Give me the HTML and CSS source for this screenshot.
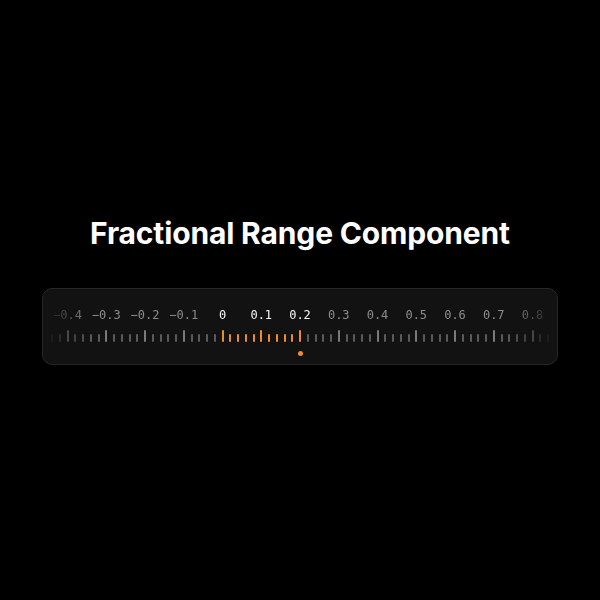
FILE: index.html
```html
<!DOCTYPE html>
<html lang="en">
<head>
    <meta charset="UTF-8">
    <meta name="viewport" content="width=device-width, initial-scale=1.0">
    <title>Fractional Range Component</title>
    <link rel="stylesheet" href="styles.css">
</head>
<body>
    <main class="demo">
        <h1 class="demo-title">Fractional Range Component</h1>
        <div class="range-card">
            <div class="ruler" id="ruler"></div>
        </div>
    </main>

    <script>
        // ruler from -0.44 to 0.84 in steps of 0.02, selection 0 -> 0.2
        const ruler = document.getElementById('ruler');
        const start = -22, end = 42;
        const selFrom = 0, selTo = 10;

        for (let i = start; i <= end; i++) {
            const col = document.createElement('div');
            col.className = 'step';

            const label = document.createElement('span');
            label.className = 'step-label';
            if (i % 5 === 0) {
                const v = i / 50;
                label.textContent = v === 0 ? '0' : (v < 0 ? '\u2212' : '') + Math.abs(v).toFixed(1);
            }
            if (i >= selFrom && i <= selTo) label.classList.add('is-active');

            const tick = document.createElement('span');
            tick.className = 'tick' + (i % 5 === 0 ? ' tick-major' : '');
            if (i >= selFrom && i <= selTo) tick.classList.add('is-active');

            const dot = document.createElement('span');
            dot.className = 'dot' + (i === selTo ? ' is-visible' : '');

            col.append(label, tick, dot);
            ruler.appendChild(col);
        }
    </script>
</body>
</html>
```

FILE: styles.css
```css
body {
    margin: 0;
    height: 100vh;
    background: #000;
    color: #fff;
    font-family: Inter, "Noto Sans", sans-serif;
    display: flex;
    justify-content: center;
    align-items: center;
}
.demo {
    display: flex;
    flex-direction: column;
    align-items: center;
    gap: 37px;
    padding-top: 2px;
    padding-bottom: 22px;
}
.demo-title {
    margin: 0;
    font-size: 30px;
    line-height: 36px;
    font-weight: 700;
    letter-spacing: -0.15px;
}
.range-card {
    width: 498px;
    padding: 19px 8px 8px;
    background-color: #121212;
    border: 1px solid #262626;
    border-radius: 10px;
}
.ruler {
    display: flex;
    justify-content: space-between;
    -webkit-mask-image: linear-gradient(90deg, rgba(0,0,0,0.15), #000 40px, #000 calc(100% - 40px), rgba(0,0,0,0.15));
    mask-image: linear-gradient(90deg, rgba(0,0,0,0.15), #000 40px, #000 calc(100% - 40px), rgba(0,0,0,0.15));
}
.step {
    width: 2px;
    display: flex;
    flex-direction: column;
    align-items: center;
}
.step-label {
    height: 14px;
    font-family: "DejaVu Sans Mono", "Liberation Mono", monospace;
    font-size: 12px;
    line-height: 14px;
    white-space: nowrap;
    color: #8c8c8c;
}
.step-label.is-active {
    color: #f6f6f6;
}
.tick {
    width: 2px;
    height: 8px;
    margin-top: 12px;
    border-radius: 1px;
    background-color: #5a5a5a;
}
.tick-major {
    height: 12px;
    margin-top: 8px;
    background-color: #7a7a7a;
}
.tick.is-active {
    background-color: #f08a2e;
}
.dot {
    width: 5px;
    height: 5px;
    margin-top: 9px;
    border-radius: 50%;
}
.dot.is-visible {
    background-color: #f08a2e;
}
```
